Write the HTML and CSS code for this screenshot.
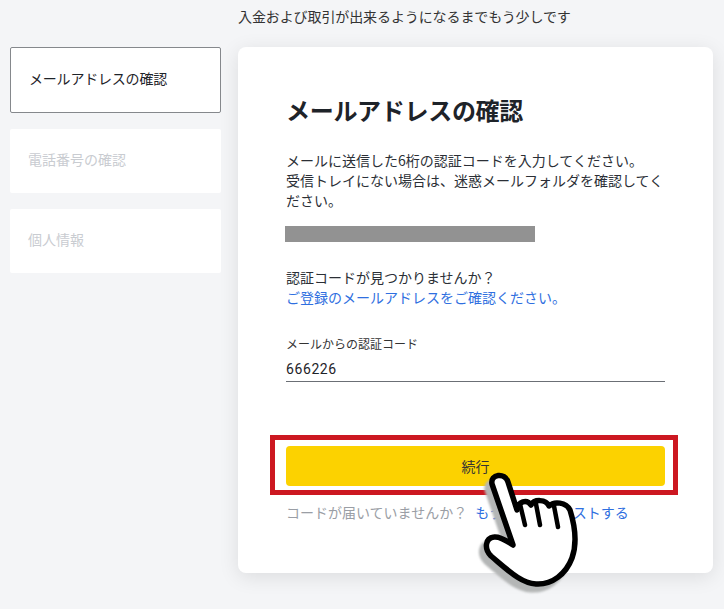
FILE: index.html
```html
<!DOCTYPE html>
<html lang="ja">

<head>
  <meta charset="UTF-8" />
  <meta name="viewport" content="width=device-width, initial-scale=1.0" />
  <title>メールアドレスの確認</title>
  <link rel="stylesheet" href="styles.css">
</head>

<body>
  <div class="page">
    <p class="lead">入金および取引が出来るようになるまでもう少しです</p>
    <div class="layout">
      <div class="steps">
        <div class="step active">メールアドレスの確認</div>
        <div class="step">電話番号の確認</div>
        <div class="step">個人情報</div>
      </div>
      <div class="card">
        <h1>メールアドレスの確認</h1>
        <p class="desc">メールに送信した6桁の認証コードを入力してください。<br>受信トレイにない場合は、迷惑メールフォルダを確認してください。</p>
        <div class="masked"></div>
        <p class="help">認証コードが見つかりませんか？<br><a href="#">ご登録のメールアドレスをご確認ください。</a></p>
        <label class="field-label">メールからの認証コード</label>
        <div class="field">666226</div>
        <button class="submit">続行</button>
        <p class="resend">コードが届いていませんか？<a href="#">もう一度リクエストする</a></p>
      </div>
    </div>
  </div>

  <!-- annotation drawn over the page -->
  <div class="red-box"></div>
  <svg class="hand" viewBox="0 0 120 140" width="120" height="140">
    <defs>
      <path id="handShape" d="M22 24 C20 14 35 12 38 22 L47 50 C48 41 57 39 61 45 C64 39 76 39 79 46 C84 41 96 42 100 50 C105 66 107 84 102 98 C96 114 82 125 66 124 C51 123 40 112 21 96 C14 89 15 78 24 77 C31 76 38 82 43 85 Z" />
    </defs>
    <use href="#handShape" class="hand-shadow" />
    <use href="#handShape" class="hand-fill" />
    <path class="hand-line" d="M50 44 L55 65 M66 44 L70 65 M84 46 L88 67" />
  </svg>
</body>

</html>
```

FILE: styles.css
```css
body {
  background: #f4f5f7;
  color: #1e2329;
  font-family: 'Noto Sans CJK JP', 'Liberation Sans', sans-serif;
  margin: 0;
  overflow: hidden;
}

.page {
  padding: 7px 11px 36px 10px;
}

.lead {
  margin: 0 0 22px 228px;
  font-size: 14px;
  line-height: 18px;
  letter-spacing: -0.1px;
  color: #333;
}

.layout {
  display: flex;
  gap: 17px;
  align-items: flex-start;
}

.steps {
  width: 211px;
  display: flex;
  flex-direction: column;
  gap: 16px;
}

.step {
  background: #fff;
  height: 64px;
  line-height: 61px;
  padding-left: 18px;
  border-radius: 2px;
  font-size: 14px;
  color: #c9ccd1;
}

.step.active {
  height: 64px;
  line-height: 61px;
  padding-left: 18px;
  border: 1px solid #85888c;
  letter-spacing: -0.2px;
  color: #1e2329;
}

.card {
  width: 379px;
  height: 526px;
  background: #fff;
  border-radius: 8px;
  box-shadow: 0 4px 20px rgba(0, 0, 0, 0.1);
  padding: 0 48px;
  overflow: hidden;
}

.card h1 {
  margin: 45px 0 22px;
  font-size: 24px;
  line-height: 36px;
  letter-spacing: -0.3px;
  font-weight: 700;
}

.desc {
  margin: 0 0 16px;
  font-size: 14px;
  line-height: 20px;
  color: #2b2f36;
}

.masked {
  width: 250px;
  height: 16px;
  margin-left: -1px;
  background: #929292;
}

.help {
  margin: 25px 0 0;
  font-size: 14px;
  line-height: 20px;
  color: #2b2f36;
}

a {
  color: #2f6fe0;
  text-decoration: none;
}

.field-label {
  display: block;
  margin-top: 27px;
  font-size: 12px;
  line-height: 20px;
  color: #333;
}

.field {
  height: 27px;
  line-height: 30px;
  font-family: 'Roboto', 'Noto Sans CJK JP', sans-serif;
  font-size: 14px;
  letter-spacing: 0.6px;
  border-bottom: 1px solid #6b6f75;
}

.submit {
  display: block;
  width: 100%;
  height: 40px;
  margin-top: 64px;
  background: #fcd200;
  color: #333;
  border: none;
  border-radius: 4px;
  font-family: inherit;
  font-size: 14px;
}

.resend {
  margin: 16px 0 0;
  font-size: 14px;
  line-height: 20px;
  color: #9a9ea5;
}

.resend a {
  margin-left: 8px;
}

.red-box {
  position: absolute;
  left: 270px;
  top: 435px;
  width: 398px;
  height: 50px;
  border: 5px solid #cc1821;
}

.hand {
  position: absolute;
  left: 470px;
  top: 460px;
}

.hand-shadow {
  fill: #b4b6b6;
  stroke: #b4b6b6;
  stroke-width: 5;
  transform: translate(-5px, 6px);
  filter: blur(1px);
}

.hand-fill {
  fill: #fff;
  stroke: #000;
  stroke-width: 5.5;
  stroke-linejoin: round;
}

.hand-line {
  fill: none;
  stroke: #000;
  stroke-width: 4.5;
  stroke-linecap: round;
}
```
